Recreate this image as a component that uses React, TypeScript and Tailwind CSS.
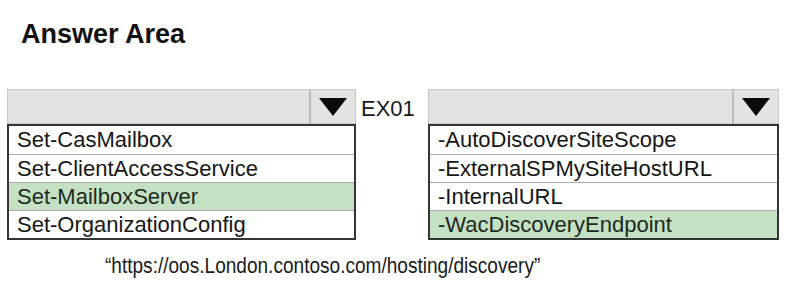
const leftOptions = [
  "Set-CasMailbox",
  "Set-ClientAccessService",
  "Set-MailboxServer",
  "Set-OrganizationConfig",
];

const rightOptions = [
  "-AutoDiscoverSiteScope",
  "-ExternalSPMySiteHostURL",
  "-InternalURL",
  "-WacDiscoveryEndpoint",
];

type DropdownProps = {
  options: string[];
  selected: string;
  width: string;
};

function Dropdown({ options, selected, width }: DropdownProps) {
  return (
    <div className={width}>
      <div className="flex h-[35px] border border-[#c9c9c9] bg-[#e3e3e3]">
        <div className="flex-1" />
        <div className="flex w-[46px] items-center justify-center border-l-2 border-[#bcbcbc]">
          <svg width="28" height="18" viewBox="0 0 28 18">
            <polygon points="0,0 28,0 14,18" fill="#0a0a0a" />
          </svg>
        </div>
      </div>
      <ul className="border-2 border-[#353535] bg-white">
        {options.map((option, index) => (
          <li
            key={option}
            className={
              (index > 0 ? "border-t border-[#ababab] " : "") +
              (option === selected ? "bg-[#c5e1c4] text-[#1d2a1d] " : "text-[#161616] ") +
              "h-[28px] pl-[8px] text-[22px] leading-[28px] whitespace-nowrap"
            }
          >
            {option}
          </li>
        ))}
      </ul>
    </div>
  );
}

export default function App() {
  return (
    <div className="h-[305px] w-[786px] overflow-hidden bg-white font-['Liberation_Sans',Arial,sans-serif] text-[#111]">
      <h1 className="pl-[21px] pt-[19px] text-[27px] leading-[30px] font-bold">
        Answer Area
      </h1>
      <div className="mt-[40px] flex items-start pl-[7px]">
        <Dropdown options={leftOptions} selected="Set-MailboxServer" width="w-[349px]" />
        <span className="ml-[5px] w-[53px] pt-[8px] text-[22px] leading-[24px] text-[#1a1a1a]">
          EX01
        </span>
        <Dropdown
          options={rightOptions}
          selected="-WacDiscoveryEndpoint"
          width="ml-[14px] w-[351px]"
        />
      </div>
      <div className="mt-[14px] pl-[105px]">
        <p className="inline-block origin-left scale-x-[0.866] text-[22px] leading-[24px] whitespace-nowrap text-[#1a1a1a]">
          “https://oos.London.contoso.com/hosting/discovery”
        </p>
      </div>
    </div>
  );
}
